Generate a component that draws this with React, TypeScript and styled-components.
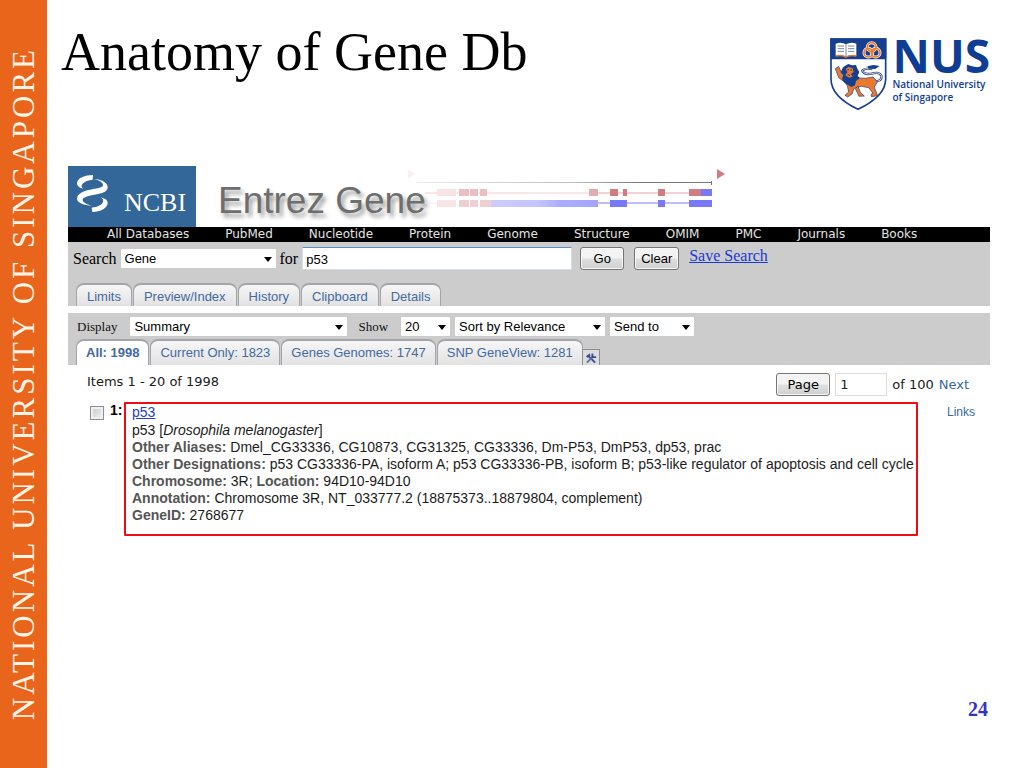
import React from "react";
import styled, { createGlobalStyle } from "styled-components";

const sans = `"Liberation Sans", Arial, sans-serif`;
const serif = `"Liberation Serif", "Times New Roman", serif`;
const wide = `"DejaVu Sans", Verdana, sans-serif`;
const humanist = `"Open Sans", "Noto Sans", sans-serif`;

const GlobalStyle = createGlobalStyle`
  *, *::before, *::after { box-sizing: border-box; }
  body { margin: 0; background: #fff; color: #000; font-family: ${sans}; }
`;

const Slide = styled.div`
  display: flex;
  min-height: 100vh;
`;

const SideBand = styled.aside`
  display: flex;
  flex: 0 0 47px;
  align-items: center;
  justify-content: center;
  background: #e8651b;
`;

const SideText = styled.span`
  writing-mode: vertical-rl;
  transform: rotate(180deg);
  font: 31px/38px ${serif};
  letter-spacing: 3px;
  white-space: nowrap;
  color: #fff4e6;
`;

const Content = styled.div`
  display: flex;
  flex: 1;
  min-width: 0;
  flex-direction: column;
`;

const SlideHeader = styled.header`
  display: flex;
  justify-content: space-between;
  align-items: flex-start;
  min-height: 166px;
  padding: 22px 34px 0 14px;
`;

const Title = styled.h1`
  margin: 0;
  font: 54px/60px ${serif};
`;

const University = styled.div`
  display: flex;
  gap: 5px;
  padding-top: 16px;
  color: #0f3d93;
  font-family: ${humanist};
`;

const UniversityWords = styled.div`
  display: flex;
  flex-direction: column;
`;

const Acronym = styled.span`
  font-size: 46px;
  line-height: 35px;
  font-weight: 700;
`;

const UniversityName = styled.span`
  padding-top: 5px;
  font-size: 10px;
  line-height: 13px;
  font-weight: 600;
`;

const Entrez = styled.main`
  margin: 0 34px 0 21px;
`;

const Banner = styled.div`
  display: flex;
  height: 61px;
`;

const NcbiLogo = styled.a`
  display: flex;
  flex: 0 0 128px;
  gap: 15px;
  padding: 8px 0 0 8px;
  background: #336699;
  color: #fff;
  font: 26px/58px ${serif};
  text-decoration: none;
`;

const BannerTitle = styled.h2`
  margin: 0 0 0 22px;
  padding-top: 13px;
  font: 37px/44px ${sans};
  color: #6e6e6e;
  text-shadow: 3px 4px 4px #999;
  white-space: nowrap;
`;

const GeneModel = styled.svg`
  flex: none;
  margin-left: -22px;
`;

const DatabaseNav = styled.nav`
  display: flex;
  gap: 36px;
  padding-left: 39px;
  background: #000;
`;

const DatabaseLink = styled.a`
  color: #e4e4e4;
  font: 12px/15px ${wide};
  text-decoration: none;
  white-space: nowrap;
`;

const SearchPanel = styled.section`
  background: #ccc;
  margin-bottom: 7px;
`;

const SearchRow = styled.form`
  display: flex;
  align-items: center;
  height: 33px;
  padding-left: 5px;
  gap: 4px;
`;

const SearchLabel = styled.label`
  font: 16px/20px ${serif};
`;

const SelectFrame = styled.span<{ $width: number }>`
  position: relative;
  display: flex;
  width: ${(p) => p.$width}px;
  &::after {
    content: "";
    position: absolute;
    right: 4px;
    top: 8px;
    border: 4px solid transparent;
    border-top: 5px solid #000;
    border-bottom: 0;
    pointer-events: none;
  }
`;

const SelectBox = styled.select`
  appearance: none;
  width: 100%;
  height: 19px;
  padding: 0 14px 0 4px;
  border: 0;
  border-radius: 1px;
  background: #fff;
  color: #000;
  font: 13px/19px ${sans};
`;

const QueryInput = styled.input`
  width: 270px;
  height: 23px;
  padding: 1px 3px 0;
  border: 1px solid #d5dde5;
  border-top-color: #5b8fc4;
  border-radius: 1px;
  background: #fff;
  font: 13px/18px ${sans};
`;

const PushButton = styled.button<{ $width: number }>`
  width: ${(p) => p.$width}px;
  height: 23px;
  padding: 1px 0 0;
  border: 1px solid #757575;
  border-radius: 3px;
  background: linear-gradient(#f3f3f3 0 45%, #dedede 55%, #d0d0d0);
  box-shadow: inset 0 0 0 1px #f8f8f8;
  color: #000;
  font: 13px/18px ${sans};
`;

const PageButton = styled(PushButton)`
  font: 13px/18px ${wide};
`;

const SearchButtons = styled.span`
  display: flex;
  gap: 10px;
  margin: 0 6px 0 4px;
`;

const SaveLink = styled.a`
  padding-bottom: 6px;
  color: #1c38d4;
  font: 16px/20px ${serif};
`;

const TabRow = styled.div<{ $top: number }>`
  display: flex;
  align-items: flex-end;
  gap: 1px;
  padding: ${(p) => p.$top}px 0 0 8px;
`;

const Tab = styled.a<{ $active?: boolean; $tall?: boolean }>`
  height: ${(p) => (p.$tall ? 26 : 23)}px;
  padding: 0 ${(p) => (p.$tall ? 9 : 10)}px;
  border: 1px solid #a4a4aa;
  border-top-width: 2px;
  border-bottom: 0;
  border-radius: 8px 8px 0 0;
  background: ${(p) => (p.$active ? "#fff" : "linear-gradient(#f6f6f6, #e2e2e2)")};
  color: #44699f;
  font: ${(p) => (p.$active ? 700 : 400)} 13px/24px ${sans};
  text-decoration: none;
  white-space: nowrap;
`;

const ToolsButton = styled.button`
  display: flex;
  width: 18px;
  height: 16px;
  margin-left: -2px;
  padding: 1px 2px 0;
  border: 1px solid #8c8c94;
  border-bottom: 0;
  background: #dcdcdc;
`;

const DisplayPanel = styled.section`
  background: #ccc;
`;

const DisplayRow = styled.form`
  display: flex;
  align-items: center;
  gap: 5px;
  padding: 4px 0 0 9px;
`;

const DisplayLabel = styled.label`
  padding-right: 8px;
  color: #111;
  font: 13px/19px ${serif};
  & ~ & { padding-left: 6px; }
`;

const Summary = styled.div`
  display: flex;
  justify-content: space-between;
  padding: 8px 21px 0 19px;
  color: #1a1a1a;
  font: 13px/18px ${wide};
`;

const Pager = styled.form`
  display: flex;
  align-items: center;
  gap: 5px;
`;

const PageInput = styled.input`
  width: 52px;
  height: 23px;
  padding: 0 4px;
  border: 1px solid #ddd;
  color: #222;
  font: 13px/18px ${wide};
`;

const BlueLink = styled.a<{ $small?: boolean }>`
  color: #36699f;
  font: ${(p) => (p.$small ? 12 : 13)}px/18px ${(p) => (p.$small ? sans : wide)};
  text-decoration: none;
`;

const ResultRow = styled.article`
  display: flex;
  align-items: flex-start;
  padding: 6px 15px 0 22px;
`;

const Tick = styled.input`
  appearance: none;
  width: 14px;
  height: 14px;
  margin: 4px 6px 0 0;
  border: 1px solid #8c8f94;
  background: linear-gradient(135deg, #c4c8cc, #f4f4f4);
  box-shadow: inset 0 0 0 2px #f0f0f0;
`;

const ResultNumber = styled.label`
  flex: 0 0 14px;
  font: 700 14px/16px ${sans};
`;

const RecordBox = styled.div`
  flex: 0 1 794px;
  min-width: 0;
  padding: 0 0 10px 6px;
  border: 2px solid #ed0d12;
  border-radius: 1px;
  color: #1c1c1c;
  font: 14px/17px ${sans};
`;

const RecordLink = styled.a`
  display: block;
  padding-bottom: 1px;
  color: #2440d0;
`;

const RecordLine = styled.p`
  margin: 0;
  white-space: nowrap;
`;

const Field = styled.b`
  color: #555;
`;

const LinksColumn = styled.div`
  margin-left: auto;
`;

const SlideNumber = styled.footer`
  margin-top: auto;
  padding: 0 36px 47px;
  color: #3434c4;
  font: 700 20px/24px ${serif};
  text-align: right;
`;

const databases = ["All Databases", "PubMed", "Nucleotide", "Protein", "Genome", "Structure", "OMIM", "PMC", "Journals", "Books"];
const searchTabs = ["Limits", "Preview/Index", "History", "Clipboard", "Details"];
const resultTabs = ["All: 1998", "Current Only: 1823", "Genes Genomes: 1747", "SNP GeneView: 1281"];

function Select({ id, width, value, label }: { id: string; width: number; value: string; label?: string }) {
  return (
    <SelectFrame $width={width}>
      <SelectBox id={id} aria-label={label} defaultValue={value}>
        <option>{value}</option>
      </SelectBox>
    </SelectFrame>
  );
}

function Crest() {
  return (
    <svg width="57" height="73" viewBox="60 55 171 219" aria-hidden="true">
      <path d="M63 58H227V178C227 222 186 249 144 269C102 249 63 222 63 178Z" fill="#fff" stroke="#16408f" strokeWidth="5" />
      <path d="M61 56H229V119H61Z" fill="#16408f" />
      <path d="M77 72Q94 66 108 74Q122 66 139 72V108Q122 103 108 111Q94 103 77 108Z" fill="#fff" />
      <path d="M77 109Q94 105 108 112Q122 105 139 109" fill="none" stroke="#e8792d" strokeWidth="5" />
      <path d="M108 74V110M83 79H102M83 87H102M83 95H102M114 79H133M114 87H133M114 95H133" stroke="#7a88a8" strokeWidth="3" />
      <g fill="none" stroke="#fff" strokeWidth="9">
        <circle cx="185" cy="82" r="13" /><circle cx="175" cy="99" r="13" /><circle cx="197" cy="99" r="13" />
      </g>
      <g fill="none" stroke="#e8792d" strokeWidth="5">
        <circle cx="185" cy="82" r="13" /><circle cx="175" cy="99" r="13" /><circle cx="197" cy="99" r="13" />
      </g>
      <path d="M190 186Q218 186 214 168Q208 155 185 162Q163 166 157 153Q164 144 187 148" fill="none" stroke="#16408f" strokeWidth="7" />
      <path d="M190 186Q218 186 214 168Q208 155 185 162Q163 166 157 153Q164 144 187 148" fill="none" stroke="#f6d9c4" strokeWidth="3" />
      <path d="M172 140L190 136L209 139L196 148L176 147Z" fill="#16408f" />
      <path d="M76 147L86 140L95 160L108 174L139 174L165 176L189 172L202 186L193 203L203 228L184 231L183 224L189 221L176 204L154 200L132 206L126 223L113 232L105 227L116 217L112 198L103 187L86 174Z" fill="#e8792d" stroke="#16408f" strokeWidth="2" />
      <path d="M144 199L151 218L163 229L147 230L136 207Z" fill="#e8792d" stroke="#16408f" strokeWidth="2" />
      <path d="M99 143L108 137L115 133L126 137L138 136L142 147L148 157L143 168L149 176L138 184L135 197L124 202L113 195L102 187L96 177L100 166L92 158Z" fill="#16408f" />
      <path d="M107 147L116 142L128 146L131 157L123 163L128 171L117 174L106 166L112 158Z" fill="#e8792d" />
      <path d="M112 150H117M121 151H126M113 164L120 168" stroke="#16408f" strokeWidth="3" />
    </svg>
  );
}

function Helix() {
  return (
    <svg width="33" height="39" viewBox="48 44 99 117" aria-hidden="true">
      <path d="M99 47C75 47 51 56 51 71C51 81 60 86 70 88C64 83 63 78 68 73C74 66 85 62 98 61Z" fill="#fff" />
      <path d="M100 59C118 62 130 70 129 78C127 86 108 88 90 91C68 95 51 103 51 119C52 131 74 138 94 139C77 134 66 128 68 120C71 111 96 108 114 104C132 100 144 94 143 82C141 68 121 59 100 59Z" fill="#fff" />
      <path d="M122 114C128 118 131 122 129 128C125 138 112 143 95 145L97 158C121 158 143 146 143 131C143 122 134 117 122 114Z" fill="#fff" />
    </svg>
  );
}

function GeneDiagram() {
  return (
    <GeneModel width="322" height="61" viewBox="404 166 322 61" aria-hidden="true">
      <defs>
        <linearGradient id="axis" gradientUnits="userSpaceOnUse" x1="415" x2="712" y1="0" y2="0">
          <stop offset="0" stopColor="#ececec" /><stop offset="0.55" stopColor="#bbb" /><stop offset="0.75" stopColor="#777" /><stop offset="1" stopColor="#777" />
        </linearGradient>
        <linearGradient id="coding" gradientUnits="userSpaceOnUse" x1="490" x2="598" y1="0" y2="0">
          <stop offset="0" stopColor="#ccccff" /><stop offset="0.45" stopColor="#c4c4ff" /><stop offset="0.65" stopColor="#acacff" /><stop offset="1" stopColor="#a4a4ff" />
        </linearGradient>
      </defs>
      <path d="M408 169L415 174L408 179Z" fill="#f9eff0" />
      <path d="M717 169L725 174L717 179Z" fill="#cf7d80" />
      <path d="M416 182H711V181H712V185H711V183H416Z" fill="url(#axis)" />
      <path d="M425 193H590" stroke="#f3cfd2" />
      <path d="M598 193H690" stroke="#e5a6aa" />
      <path d="M598 203H690" stroke="#bdbdff" strokeWidth="2" />
      <path d="M425 203H438" stroke="#f8e5ee" />
      <path d="M437 189H456V196H437ZM437 200H456V207H437Z" fill="#f8e4e5" />
      <path d="M459 200H469V207H459ZM470 200H478V207H470ZM480 200H492V207H480Z" fill="#f0cfd2" />
      <path d="M459 189H469V196H459ZM470 189H478V196H470ZM480 189H487V196H480Z" fill="#eabfc2" />
      <path d="M589 189H598V196H589Z" fill="#e0adb0" />
      <path d="M610 189H618V196H610ZM623 189H627V196H623ZM658 189H665V196H658ZM689 189H701V196H689Z" fill="#cf7d80" />
      <path d="M701 189H712V196H701ZM610 200H627V207H610ZM658 200H665V207H658ZM689 200H712V207H689Z" fill="#7878f8" />
      <path d="M491 200H598V207H491Z" fill="url(#coding)" />
    </GeneModel>
  );
}

function ToolsIcon() {
  return (
    <svg width="13" height="14" viewBox="0 0 13 14" aria-hidden="true">
      <path d="M3 4L11 12" stroke="#3a4f8f" strokeWidth="2" />
      <path d="M1 5L5 2L6 4L3 7Z" fill="#3a4f8f" />
      <path d="M2 12L9 5" stroke="#5871b0" strokeWidth="2" />
      <path d="M8 2V6H12" fill="none" stroke="#3a4f8f" strokeWidth="2" />
    </svg>
  );
}

export default function App() {
  return (
    <>
      <GlobalStyle />
      <Slide>
        <SideBand>
          <SideText>NATIONAL UNIVERSITY OF SINGAPORE</SideText>
        </SideBand>
        <Content>
          <SlideHeader>
            <Title>Anatomy of Gene Db</Title>
            <University>
              <Crest />
              <UniversityWords>
                <Acronym>NUS</Acronym>
                <UniversityName>National University<br />of Singapore</UniversityName>
              </UniversityWords>
            </University>
          </SlideHeader>
          <Entrez>
            <Banner>
              <NcbiLogo href="#ncbi"><Helix />NCBI</NcbiLogo>
              <BannerTitle>Entrez Gene</BannerTitle>
              <GeneDiagram />
            </Banner>
            <DatabaseNav>
              {databases.map((name) => <DatabaseLink key={name} href="#database">{name}</DatabaseLink>)}
            </DatabaseNav>
            <SearchPanel>
              <SearchRow>
                <SearchLabel htmlFor="database">Search</SearchLabel>
                <Select id="database" width={155} value="Gene" />
                <SearchLabel htmlFor="query">for</SearchLabel>
                <QueryInput id="query" defaultValue="p53" />
                <SearchButtons>
                  <PushButton type="button" $width={44}>Go</PushButton>
                  <PushButton type="button" $width={45}>Clear</PushButton>
                </SearchButtons>
                <SaveLink href="#save">Save Search</SaveLink>
              </SearchRow>
              <TabRow $top={8}>
                {searchTabs.map((name) => <Tab key={name} href="#tab">{name}</Tab>)}
              </TabRow>
            </SearchPanel>
            <DisplayPanel>
              <DisplayRow>
                <DisplayLabel htmlFor="format">Display</DisplayLabel>
                <Select id="format" width={217} value="Summary" />
                <DisplayLabel htmlFor="count">Show</DisplayLabel>
                <Select id="count" width={49} value="20" />
                <Select id="sort" width={150} value="Sort by Relevance" label="Sort" />
                <Select id="send" width={84} value="Send to" label="Send to" />
              </DisplayRow>
              <TabRow $top={3}>
                {resultTabs.map((name, i) => <Tab key={name} href="#results" $tall $active={i === 0}>{name}</Tab>)}
                <ToolsButton type="button" aria-label="Tools"><ToolsIcon /></ToolsButton>
              </TabRow>
            </DisplayPanel>
            <Summary>
              <span>Items 1 - 20 of 1998</span>
              <Pager>
                <PageButton type="button" $width={54}>Page</PageButton>
                <PageInput aria-label="Page number" defaultValue="1" />
                <label>of 100</label>
                <BlueLink href="#next">Next</BlueLink>
              </Pager>
            </Summary>
            <ResultRow>
              <Tick type="checkbox" id="result" />
              <ResultNumber htmlFor="result">1:</ResultNumber>
              <RecordBox>
                <RecordLink href="#p53">p53</RecordLink>
                <RecordLine>p53 [<i>Drosophila melanogaster</i>]</RecordLine>
                <RecordLine><Field>Other Aliases:</Field> Dmel_CG33336, CG10873, CG31325, CG33336, Dm-P53, DmP53, dp53, prac</RecordLine>
                <RecordLine><Field>Other Designations:</Field> p53 CG33336-PA, isoform A; p53 CG33336-PB, isoform B; p53-like regulator of apoptosis and cell cycle</RecordLine>
                <RecordLine><Field>Chromosome:</Field> 3R; <Field>Location:</Field> 94D10-94D10</RecordLine>
                <RecordLine><Field>Annotation:</Field> Chromosome 3R, NT_033777.2 (18875373..18879804, complement)</RecordLine>
                <RecordLine><Field>GeneID:</Field> 2768677</RecordLine>
              </RecordBox>
              <LinksColumn><BlueLink $small href="#links">Links</BlueLink></LinksColumn>
            </ResultRow>
          </Entrez>
          <SlideNumber>24</SlideNumber>
        </Content>
      </Slide>
    </>
  );
}
